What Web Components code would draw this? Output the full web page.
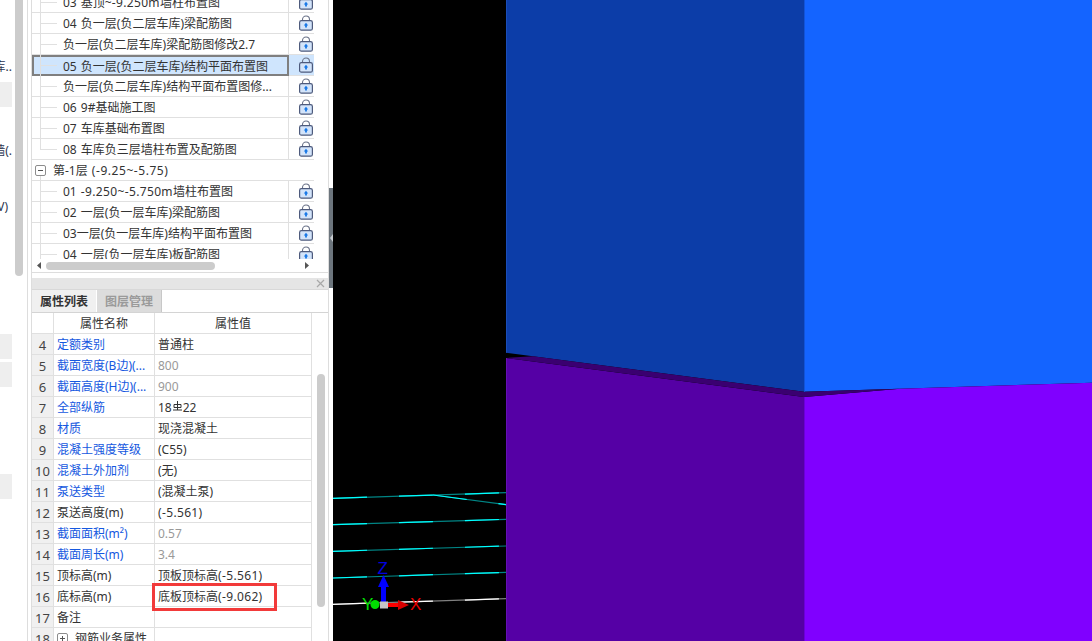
<!DOCTYPE html>
<html lang="zh-CN">
<head>
<meta charset="utf-8">
<title>属性列表</title>
<style>
  html, body { margin: 0; height: 100%; overflow: hidden; background: #fff; }
  body { font: 12px/20px "Noto Sans", "Noto Sans CJK SC", sans-serif; color: #333; }
  .num { letter-spacing: .35px; }
  .num-wide { letter-spacing: .55px; }
</style>
</head>
<body>
<cad-app>
  <left-strip slot="strip"></left-strip>
  <side-panel slot="panel">
    <drawing-tree slot="tree">
      <tree-row>03 基顶~<span class="num">-9.250m</span>墙柱布置图</tree-row>
      <tree-row>04 负一层(负二层车库)梁配筋图</tree-row>
      <tree-row>负一层(负二层车库)梁配筋图修改2.7</tree-row>
      <tree-row selected>05 负一层(负二层车库)结构平面布置图</tree-row>
      <tree-row>负一层(负二层车库)结构平面布置图修...</tree-row>
      <tree-row>06 9#基础施工图</tree-row>
      <tree-row>07 车库基础布置图</tree-row>
      <tree-row last>08 车库负三层墙柱布置及配筋图</tree-row>
      <tree-group>第-1层 <span class="num-wide">(-9.25~-5.75)</span></tree-group>
      <tree-row>01 <span class="num">-9.250~-5.750m</span>墙柱布置图</tree-row>
      <tree-row>02 一层(负一层车库)梁配筋图</tree-row>
      <tree-row>03一层(负一层车库)结构平面布置图</tree-row>
      <tree-row>04 一层(负一层车库)板配筋图</tree-row>
    </drawing-tree>
    <prop-table slot="props">
      <prop-row head><span slot="name">属性名称</span>属性值</prop-row>
      <prop-row n="4" link><span slot="name">定额类别</span>普通柱</prop-row>
      <prop-row n="5" link muted><span slot="name">截面宽度(B边)(...</span>800</prop-row>
      <prop-row n="6" link muted><span slot="name">截面高度(H边)(...</span>900</prop-row>
      <prop-row n="7" link><span slot="name">全部纵筋</span>18<rebar-mark></rebar-mark>22</prop-row>
      <prop-row n="8" link><span slot="name">材质</span>现浇混凝土</prop-row>
      <prop-row n="9" link><span slot="name">混凝土强度等级</span>(C55)</prop-row>
      <prop-row n="10" link><span slot="name">混凝土外加剂</span>(无)</prop-row>
      <prop-row n="11" link><span slot="name">泵送类型</span>(混凝土泵)</prop-row>
      <prop-row n="12"><span slot="name">泵送高度(m)</span><span class="num">(-5.561)</span></prop-row>
      <prop-row n="13" link muted><span slot="name">截面面积(m²)</span>0.57</prop-row>
      <prop-row n="14" link muted><span slot="name">截面周长(m)</span>3.4</prop-row>
      <prop-row n="15"><span slot="name">顶标高(m)</span>顶板顶标高<span class="num">(-5.561)</span></prop-row>
      <prop-row n="16" flag><span slot="name">底标高(m)</span>底板顶标高<span class="num">(-9.062)</span></prop-row>
      <prop-row n="17"><span slot="name">备注</span></prop-row>
      <prop-row n="18"><span slot="name"><expand-box style="margin-right:7px"></expand-box>钢筋业务属性</span></prop-row>
    </prop-table>
  </side-panel>
  <model-view slot="view"></model-view>
</cad-app>

<script>
const LINE = '#e0e0e0';

class CadApp extends HTMLElement {
  constructor() {
    super();
    this.attachShadow({ mode: 'open' }).innerHTML = `
      <style>
        :host { display: flex; width: 1092px; height: 641px; overflow: hidden; background: #fff; }
        .gutter { flex: 0 0 4px; }
        .grip { display: flex; align-items: center; margin-top: 188px; height: 100px; background: #6c757d; }
        .grip svg { display: block; }
        ::slotted(model-view) { flex: 1; }
      </style>
      <slot name="strip"></slot>
      <slot name="panel"></slot>
      <div class="gutter">
        <div class="grip"><svg width="4" height="8" viewBox="0 0 4 8"><path d="M4 0v8L1 4z" fill="#c8ccd0"/></svg></div>
      </div>
      <slot name="view"></slot>
    `;
  }
}

class LeftStrip extends HTMLElement {
  constructor() {
    super();
    const rows = ['', '', '车库..', '#', '', '墙(.', '', '<span class="in">(V)</span>', '', '', '', '', '#', '#', '', '', '', '#', '', '', '', '', ''];
    const html = rows.map(r => r === '#' ? '<div class="row box"></div>' : `<div class="row">${r}</div>`).join('');
    this.attachShadow({ mode: 'open' }).innerHTML = `
      <style>
        :host { display: flex; flex: 0 0 27px; height: 641px; overflow: hidden; }
        .list { display: flex; flex-direction: column; gap: 3px; width: 12px; margin-top: -2px; overflow: hidden; }
        .row { flex: 0 0 25px; display: flex; justify-content: flex-end; align-items: center; white-space: nowrap; color: #2c3550; }
        .in { margin-right: 4px; }
        .box { background: #eee; }
        .bar { width: 8px; height: 276px; margin-left: 3px; background: #ccc; border-radius: 0 0 4px 4px; }
      </style>
      <div class="list">${html}</div>
      <div class="bar"></div>
    `;
  }
}

class SidePanel extends HTMLElement {
  constructor() {
    super();
    this.attachShadow({ mode: 'open' }).innerHTML = `
      <style>
        :host { display: block; flex: 0 0 302px; box-sizing: border-box; height: 641px; padding-left: 3px; border-left: 1px solid #ddd; }
        .inner { display: flex; flex-direction: column; height: 100%; box-sizing: border-box; border-left: 1px solid #ddd; border-right: 1px solid #ddd; }
        .title { display: flex; justify-content: flex-end; align-items: center; flex: 0 0 11px; margin-top: 5px; padding-right: 3px; background: #e5e5e5; border-bottom: 1px solid #d8d8d8; }
        .title svg { display: block; }
        .tabs { display: flex; flex: 0 0 22px; gap: 1px; border-bottom: 1px solid #d4d4d4; background: #fff; }
        .tab { display: flex; align-items: center; justify-content: center; width: 64px; font-weight: 700; padding-top: 1px; box-sizing: border-box; }
        .tab.on { background: #f0f0f0; color: #333; }
        .tab.off { width: 65px; background: #dcdcdc; color: #9a9a9a; border-right: 1px solid #c8c8c8; }
        ::slotted(prop-table) { flex: 1; min-height: 0; }
      </style>
      <div class="inner">
        <slot name="tree"></slot>
        <div class="title"><svg width="9" height="9" viewBox="0 0 9 9"><path d="M1 1l7 7M8 1L1 8" stroke="#a8a8a8" stroke-width="1.2" fill="none"/></svg></div>
        <div class="tabs"><div class="tab on">属性列表</div><div class="tab off">图层管理</div></div>
        <slot name="props"></slot>
      </div>
    `;
  }
}

class DrawingTree extends HTMLElement {
  constructor() {
    super();
    this.attachShadow({ mode: 'open' }).innerHTML = `
      <style>
        :host { display: block; border-bottom: 1px solid #ddd; }
        .rows { height: 259px; overflow: hidden; }
        .rows-in { margin-top: -8px; }
        .hbar { display: flex; align-items: center; height: 13px; padding-left: 5px; }
        .thumb { width: 169px; height: 8px; margin-left: 5px; border-radius: 4px; background: #ccc; }
        .hbar svg { display: block; }
        .hbar .next { margin-left: 90px; }
      </style>
      <div class="rows"><div class="rows-in"><slot></slot></div></div>
      <div class="hbar">
        <svg width="4" height="7" viewBox="0 0 4 7"><path d="M4 0v7L0 3.5z" fill="#555"/></svg>
        <div class="thumb"></div>
        <svg class="next" width="4" height="7" viewBox="0 0 4 7"><path d="M0 0v7l4-3.5z" fill="#555"/></svg>
      </div>
    `;
  }
}

class TreeRow extends HTMLElement {
  constructor() {
    super();
    this.attachShadow({ mode: 'open' }).innerHTML = `
      <style>
        :host { display: flex; position: relative; width: 282px; height: 21px; }
        :host::before { content: ''; position: absolute; left: 8px; top: 0; bottom: 0; width: 1px; background: ${LINE}; }
        :host::after { content: ''; position: absolute; left: 8px; top: 10px; width: 17px; height: 1px; background: ${LINE}; }
        :host([last])::before { bottom: 10px; }
        .name { box-sizing: border-box; flex: 0 0 257px; padding-left: 31px; line-height: 22px; word-spacing: 1px; white-space: nowrap; overflow: hidden; border-right: 1px solid ${LINE}; border-bottom: 1px solid ${LINE}; }
        .lock { box-sizing: border-box; flex: 0 0 25px; padding: 2px 0 0 10px; border-bottom: 1px solid ${LINE}; }
        :host([selected]) .name { background: #cfe5fd; border: 2px solid #7f7f7f; padding-left: 29px; line-height: 19px; }
        :host([selected]) .lock { background: #cfe5fd; }
      </style>
      <div class="name"><slot></slot></div>
      <div class="lock"><lock-icon></lock-icon></div>
    `;
  }
}

class TreeGroup extends HTMLElement {
  constructor() {
    super();
    this.attachShadow({ mode: 'open' }).innerHTML = `
      <style>
        :host { display: flex; align-items: center; gap: 7px; position: relative; box-sizing: border-box; width: 282px; height: 21px; padding-left: 3px; word-spacing: 1px; border-bottom: 1px solid ${LINE}; }
        :host::after { content: ''; position: absolute; left: 8px; top: 16px; bottom: 0; width: 1px; background: ${LINE}; }
        .label { white-space: nowrap; padding-top: 1px; }
      </style>
      <expand-box open></expand-box><div class="label"><slot></slot></div>
    `;
  }
}

class ExpandBox extends HTMLElement {
  constructor() {
    super();
    const bar = this.hasAttribute('open') ? '' : '<path d="M5.5 3v5" stroke="#555"/>';
    this.attachShadow({ mode: 'open' }).innerHTML = `
      <style>
        :host { display: inline-block; width: 11px; height: 11px; vertical-align: -1px; }
        svg { display: block; }
      </style>
      <svg width="11" height="11" viewBox="0 0 11 11" fill="none">
        <rect x=".5" y=".5" width="10" height="10" rx="1.5" stroke="#8c8c8c"/>
        <path d="M3 5.5h5" stroke="#555"/>${bar}
      </svg>
    `;
  }
}

class LockIcon extends HTMLElement {
  constructor() {
    super();
    this.attachShadow({ mode: 'open' }).innerHTML = `
      <style>
        :host { display: block; width: 14px; height: 16px; }
        svg { display: block; }
      </style>
      <svg width="14" height="16" viewBox="0 0 14 16" fill="none">
        <path d="M3.5 6V4.5a3.5 3.5 0 0 1 7 0V6" stroke="#6a7288" stroke-width="1.1"/>
        <rect x=".6" y="5.6" width="12.8" height="9.6" rx="1.8" fill="#d3e4fa" stroke="#4d5a7c" stroke-width="1.2"/>
        <path d="M7 7.8l2.2 2.6H7.9v2.2H6.1v-2.2H4.8z" fill="#1677e6"/>
      </svg>
    `;
  }
}

class PropTable extends HTMLElement {
  constructor() {
    super();
    this.attachShadow({ mode: 'open' }).innerHTML = `
      <style>
        :host { display: flex; overflow: hidden; }
        .rows { flex: 0 0 280px; }
        .bar { width: 8px; height: 233px; margin: 61px 0 0 5px; border-radius: 4px; background: #ccc; }
      </style>
      <div class="rows"><slot></slot></div>
      <div class="bar"></div>
    `;
  }
}

class PropRow extends HTMLElement {
  constructor() {
    super();
    const n = this.getAttribute('n') ?? '';
    this.attachShadow({ mode: 'open' }).innerHTML = `
      <style>
        :host { display: flex; height: 21px; line-height: 22px; white-space: nowrap; }
        div { box-sizing: border-box; border-bottom: 1px solid ${LINE}; border-right: 1px solid ${LINE}; }
        .n { flex: 0 0 22px; font-size: 13px; text-align: center; background: #f0f0f0; color: #444; }
        .name { flex: 0 0 101px; padding-left: 3px; overflow: hidden; }
        .val { flex: 0 0 157px; padding-left: 3px; position: relative; }
        :host([link]) .name { color: #1558e0; }
        :host([muted]) .val { color: #999; }
        :host([head]) .n { background: #fff; }
        :host([head]) .name, :host([head]) .val { padding-left: 0; text-align: center; }
        :host([flag]) .val::after { content: ''; position: absolute; left: -3px; top: -3px; width: 125px; height: 28px; box-sizing: border-box; border: 3px solid #f23a3a; }
      </style>
      <div class="n">${n}</div>
      <div class="name"><slot name="name"></slot></div>
      <div class="val"><slot></slot></div>
    `;
  }
}

class RebarMark extends HTMLElement {
  constructor() {
    super();
    this.attachShadow({ mode: 'open' }).innerHTML = `
      <style>
        :host { display: inline-block; width: 9px; height: 10px; margin: 0 1px 0 1px; vertical-align: 1px; }
        svg { display: block; }
      </style>
      <svg width="9" height="10" viewBox="0 0 9 10" fill="none" stroke="#333" stroke-width="1">
        <path d="M4.5 0v9M1 3.5h7v3H1zM0 9h9"/>
      </svg>
    `;
  }
}

class ModelView extends HTMLElement {
  constructor() {
    super();
    const cyan = [
      [333, 498.3, 506, 492.7],
      [433, 495, 506, 504.7],
      [333, 524.7, 506, 519.3],
      [333, 551.3, 506, 546],
      [333, 578, 506, 572.3],
    ];
    const wire = (l, dim, lit) => {
      const p = `x1="${l[0]}" y1="${l[1]}" x2="${l[2]}" y2="${l[3]}"`;
      return `<line ${p} stroke="${dim}" stroke-width="1.2"/><line ${p} stroke="${lit}" stroke-width="1.2" stroke-dasharray="34 32"/>`;
    };
    this.attachShadow({ mode: 'open' }).innerHTML = `
      <style>
        :host { display: block; height: 641px; background: #000; }
        svg { display: block; }
        text { font: 17px "Liberation Sans", sans-serif; }
      </style>
      <svg width="759" height="641" viewBox="333 0 759 641">
        ${cyan.map(l => wire(l, '#008585', '#00ffff')).join('')}
        ${wire([333, 604.3, 506, 598.7], '#808080', '#ffffff')}

        <polygon points="506,0 804,0 804,391.7 506,352.7" fill="#0c3da8"/>
        <polygon points="804,0 1092,0 1092,382.7 804,391.7" fill="#1464ff"/>
        <polygon points="506,358 804,397 804,641 506,641" fill="#5500a5"/>
        <polygon points="804,397 900,388.7 1092,382.7 1092,641 804,641" fill="#8000ff"/>
        <polygon points="506,358 533,356.2 804,391.7 900,388.7 804,397" fill="#3a0070"/>
        <path d="M506.5 0V352.7" stroke="#1a4db8"/>
        <path d="M804.5 0V391.7" stroke="#1254d8"/>
        <path d="M506.5 358V641" stroke="#6410b4"/>
        <path d="M804.5 397V641" stroke="#6c00d8"/>

        <rect x="381" y="587" width="5" height="15" fill="#0000ff"/>
        <polygon points="383.5,575 378,587 389,587" fill="#0000ff"/>
        <circle cx="375" cy="604.5" r="4.5" fill="#00e000"/>
        <rect x="388" y="603" width="10" height="4" fill="#ff0000"/>
        <polygon points="409,605 398,600 398,610" fill="#d80000"/>
        <rect x="380" y="601.5" width="8" height="7" fill="#c4c4c4"/>
        <text x="377.5" y="574" fill="#0000e0">Z</text>
        <text x="362" y="610" fill="#00e000">Y</text>
        <text x="410" y="610" fill="#e80000">X</text>
      </svg>
    `;
  }
}

customElements.define('cad-app', CadApp);
customElements.define('left-strip', LeftStrip);
customElements.define('side-panel', SidePanel);
customElements.define('drawing-tree', DrawingTree);
customElements.define('tree-row', TreeRow);
customElements.define('tree-group', TreeGroup);
customElements.define('expand-box', ExpandBox);
customElements.define('lock-icon', LockIcon);
customElements.define('prop-table', PropTable);
customElements.define('prop-row', PropRow);
customElements.define('rebar-mark', RebarMark);
customElements.define('model-view', ModelView);
</script>
</body>
</html>
